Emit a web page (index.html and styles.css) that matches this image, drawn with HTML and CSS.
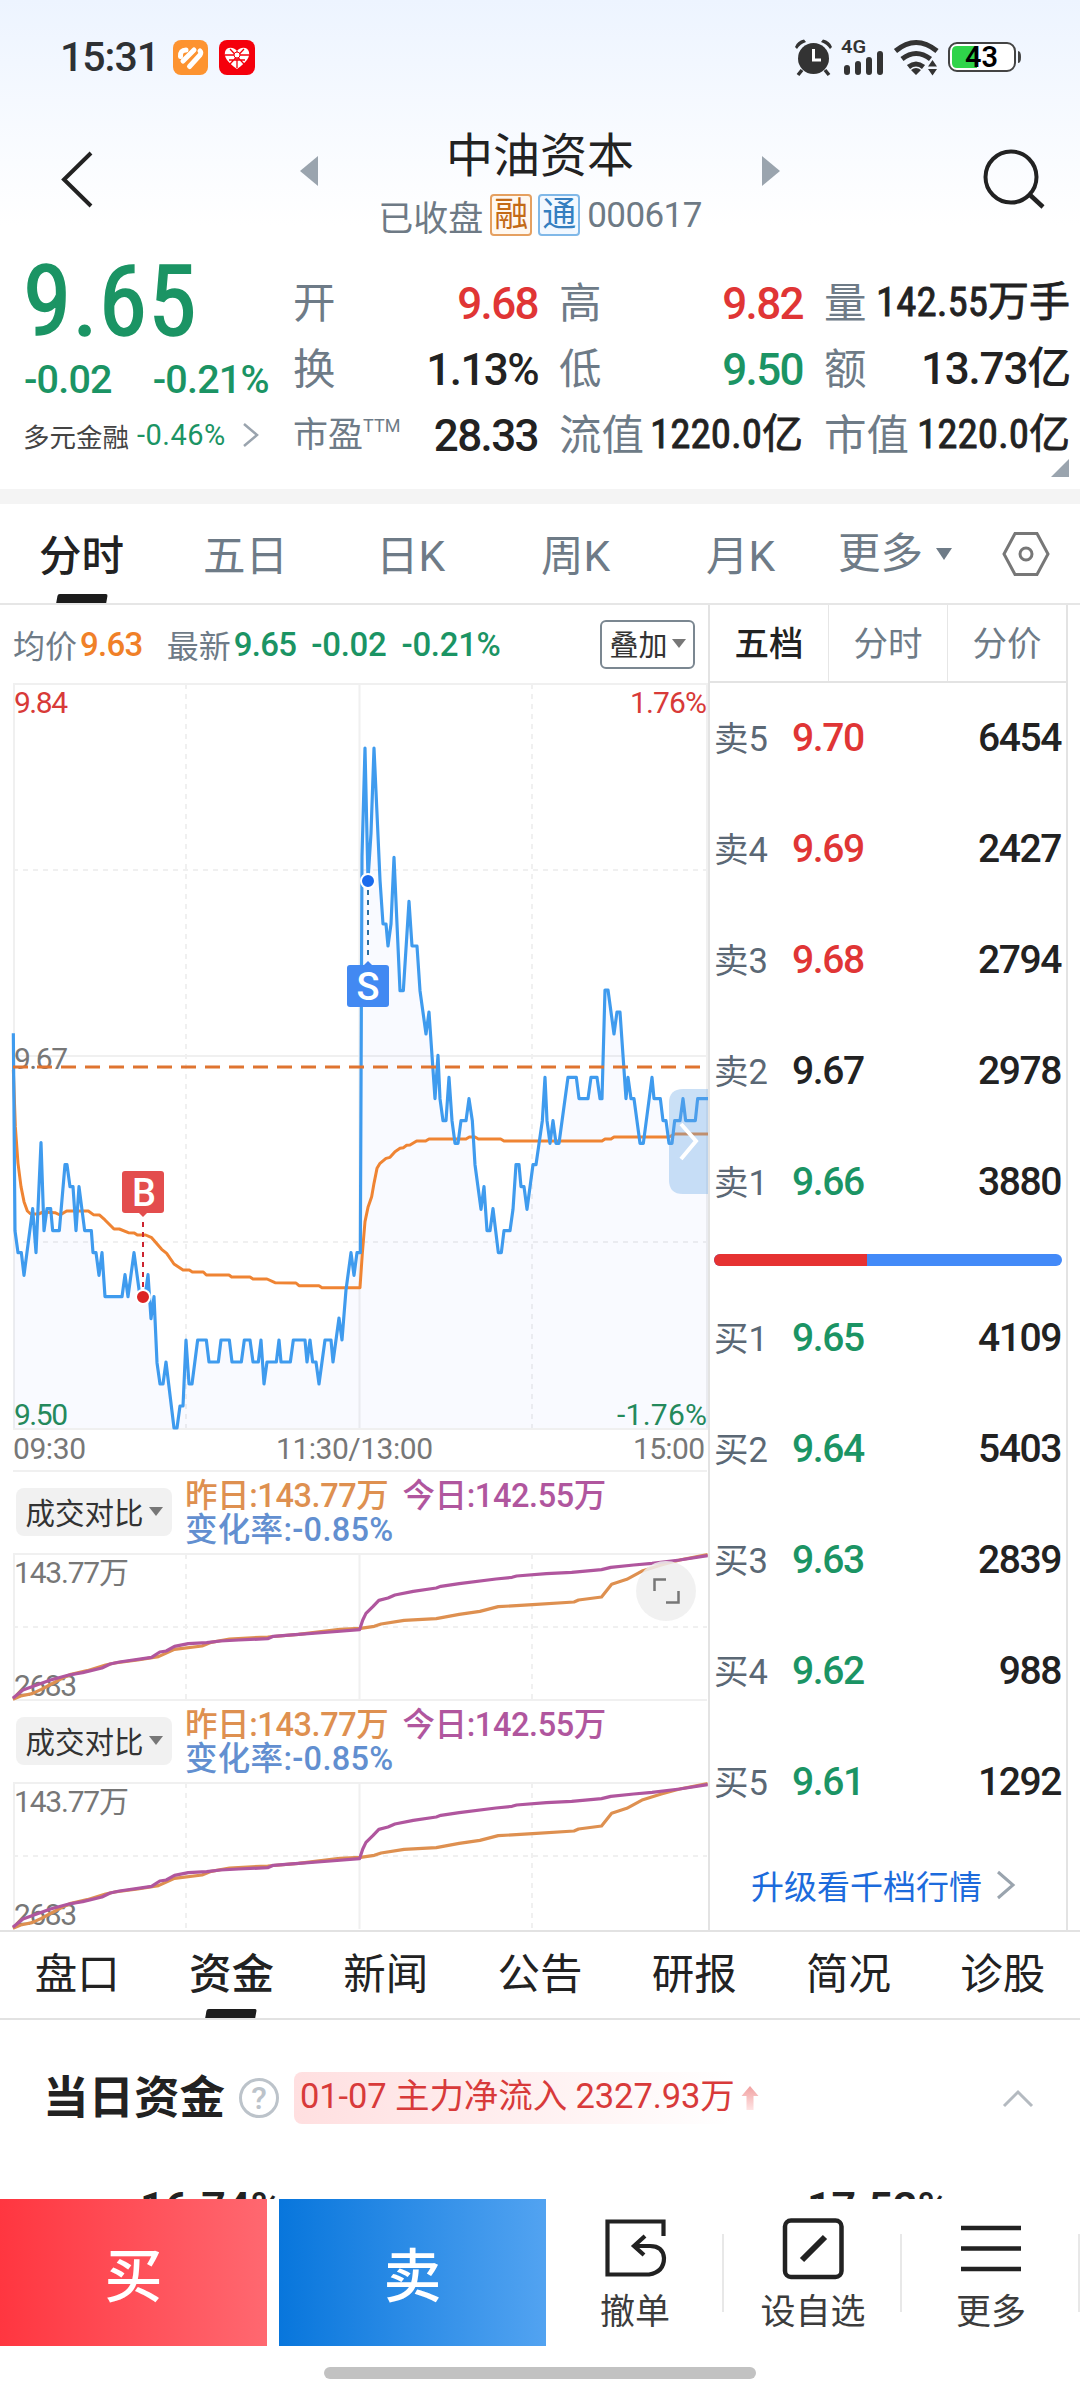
FILE: index.html
```html
<!DOCTYPE html>
<html lang="zh-CN">
<head>
<meta charset="utf-8">
<title>中油资本 000617</title>
<link rel="stylesheet" href="styles.css">
</head>
<body>
<div class="screen">
  <header class="top">
    <div class="status">
      <span class="clock">15:31</span>
      <svg class="app-icon" width="35" height="35" viewBox="0 0 35 35"><rect width="35" height="35" rx="8" fill="#fd9330"/><g stroke="#fff" stroke-width="5" stroke-linecap="round" fill="none"><path d="M7.500 16.500Q7 10 13 10"/><path d="M10 21L21 10"/><path d="M16.500 26.500L27 15Q28.500 12.500 27 11"/></g></svg>
      <svg class="app-icon" width="36" height="35" viewBox="0 0 36 35"><rect width="36" height="35" rx="8" fill="#f5000c"/><path d="M18 29C8 22 5 17 6 12C7 7 14 6 18 11C22 6 29 7 30 12C31 17 28 22 18 29Z" fill="#fff"/><g stroke="#f5000c" stroke-width="1.300" fill="none"><path d="M11 9L25 24M25 9L11 24M6 15H30M10 20H26M18 11V28"/></g><circle cx="18" cy="15" r="3" fill="#fff" stroke="#f5000c"/></svg>
      <svg class="sys" width="230" height="40" viewBox="791 37 230 40">
        <g fill="#333"><circle cx="813.500" cy="58.500" r="15.500"/><path d="M795 47Q797 41 804 39.500L806 42Q800 44 797 49ZM832 47Q830 41 823 39.500L821 42Q827 44 830 49Z"/></g>
        <path d="M802 70L798 75M825 70L829 75" stroke="#333" stroke-width="3.500"/><path d="M813.500 49V60H821" stroke="#fff" stroke-width="3" fill="none"/>
        <text x="841" y="53" class="g4" textLength="25" lengthAdjust="spacingAndGlyphs">4G</text>
        <g stroke="#333" stroke-width="6" stroke-linecap="round"><path d="M847 68V72M858 64V72M869 60V72M880 54V72"/></g>
        <g fill="none" stroke="#333" stroke-width="5"><path d="M895.500 51Q916 34 937 51"/><path d="M902 59Q916 48 930.500 59"/><path d="M908.500 67Q916 61 923.500 67"/></g>
        <path d="M911 70Q916 66 921 70L916 75ZM928 66.500L932.500 60L937 66.500ZM928 69L932.500 75.500L937 69Z" fill="#333"/>
        <rect x="949" y="43" width="66" height="28" rx="8" fill="#fff" stroke="#444" stroke-width="2"/><path d="M957 46H977V68H957Q952 68 952 63V51Q952 46 957 46Z" fill="#2fd44a"/><path d="M1018 51Q1021 51 1021 57Q1021 63 1018 63Z" fill="#444"/>
        <text x="965" y="67" class="bat" textLength="33" lengthAdjust="spacingAndGlyphs">43</text>
      </svg>
    </div>
    <div class="titlebar">
      <svg class="back" width="34" height="60" viewBox="0 0 34 60"><path d="M31 3L4 29.500L31 56" fill="none" stroke="#222" stroke-width="4"/></svg>
      <svg class="prev" width="18" height="30" viewBox="0 0 18 30"><path d="M18 0V30L0 15Z" fill="#9aa4ae"/></svg>
      <div class="names">
        <h1>中油资本</h1>
        <p><span>已收盘</span><i class="tag rong">融</i><i class="tag tong">通</i><b>000617</b></p>
      </div>
      <svg class="next" width="18" height="30" viewBox="0 0 18 30"><path d="M0 0V30L18 15Z" fill="#9aa4ae"/></svg>
      <svg class="search" width="62" height="60" viewBox="983 149 62 60"><circle cx="1011" cy="177" r="25.500" fill="none" stroke="#222" stroke-width="4"/><path d="M1029 194L1043 207" stroke="#222" stroke-width="4.500"/></svg>
    </div>
  </header>

  <section class="quote">
    <div class="price">
      <strong>9.65</strong>
      <div class="delta"><span>-0.02</span><span>-0.21%</span></div>
      <div class="sector"><span>多元金融</span><em>-0.46%</em><svg width="18" height="26" viewBox="0 0 18 26"><path d="M2 2L15 13L2 24" fill="none" stroke="#9aa4ae" stroke-width="2.500"/></svg></div>
    </div>
    <dl class="facts">
      <div><dt>开</dt><dd class="up">9.68</dd></div><div><dt>高</dt><dd class="up">9.82</dd></div><div><dt>量</dt><dd class="cn">142.55万手</dd></div>
      <div><dt>换</dt><dd>1.13%</dd></div><div><dt>低</dt><dd class="down">9.50</dd></div><div><dt>额</dt><dd class="yi">13.73亿</dd></div>
      <div><dt class="small">市盈<sup>TTM</sup></dt><dd>28.33</dd></div><div><dt>流值</dt><dd class="cn">1220.0亿</dd></div><div><dt>市值</dt><dd class="cn">1220.0亿</dd></div>
    </dl>
    <i class="corner"></i>
  </section>

  <nav class="periods">
    <span class="on">分时</span><span>五日</span><span>日K</span><span>周K</span><span>月K</span><span class="more">更多<i></i></span>
    <svg width="48" height="46" viewBox="0 0 48 46"><path d="M13 2.500H35L46 23L35 43.500H13L2 23Z" fill="none" stroke="#777" stroke-width="3"/><circle cx="24" cy="23" r="6" fill="none" stroke="#777" stroke-width="3"/></svg>
  </nav>

  <main class="board">
    <section class="charts">
      <div class="legend"><span>均价</span><b class="avg">9.63</b><span class="l2">最新</span><b>9.65</b><b class="l3">-0.02</b><b class="l4">-0.21%</b><button>叠加<i></i></button></div>
      <svg class="trend" width="695" height="788" viewBox="13 683 695 788">
        <g fill="none" stroke="#f0f0f0" stroke-width="2"><path d="M13 684H707V1429H14V684M359.500 684V1429M13 1056H707M13 1471H707"/><path d="M186 684V1429M532 684V1429M13 870H707M13 1242H707" stroke-dasharray="5 5"/></g>
        <g transform="translate(0 1020) scale(.33333)" stroke-linejoin="round">
          <path fill="rgba(60,110,250,.03)" d="M40 1224V40L45 632 54 698 64 698 72 766 98 566 108 698 123 368 132 632 141 566 152 566 158 632 178 632 195 434 201 434 210 500 219 500 228 632 237 500 254 632 274 632 279 698 288 698 297 766 306 698 315 830 366 830 375 764 384 830 402 698 420 830 435 830 444 764 453 896 462 830 471 1028 480 1092 489 1092 498 1026 522 1224 531 1224 540 1158 549 1158 558 960 567 1092 576 1092 593 960 619 960 627 1026 655 1026 663 960 688 960 696 1026 724 1026 733 960 750 960 759 1026 775 1026 783 960 792 1092 801 1026 829 1026 837 960 843 1026 871 1026 880 960 915 960 921 1026 930 960 938 1026 948 1026 957 1092 975 960 993 960 999 1026 1017 894 1026 960 1038 810 1053 698 1062 766 1071 698 1081 698 1086 -490 1095 -816 1104 -420 1113 -560 1122 -816 1131 -620 1140 -420 1149 -288 1158 -288 1164 -222 1173 -288 1182 -488 1200 -88 1210 -88 1227 -356 1236 -222 1251 -222 1260 -88 1278 42 1287 -24 1305 236 1314 106 1320 236 1329 302 1338 302 1347 172 1356 302 1365 370 1374 370 1383 302 1398 302 1407 236 1417 302 1425 434 1443 568 1452 500 1461 632 1470 632 1479 566 1487 632 1495 698 1504 698 1512 632 1530 632 1539 568 1548 434 1557 434 1563 500 1572 500 1581 568 1599 434 1608 434 1627 302 1635 172 1641 302 1650 370 1659 302 1668 370 1677 370 1704 172 1729 172 1737 236 1764 236 1773 172 1791 172 1800 236 1806 236 1815 -90 1824 -90 1842 42 1851 -24 1860 -24 1878 236 1884 172 1893 236 1902 236 1920 370 1930 370 1956 172 1962 236 1981 236 1989 302 1998 302 2007 370 2016 370 2024 302 2040 302 2049 236 2057 302 2086 302 2093 236 2124 236V1224Z"/>
          <path fill="none" stroke="#ef8433" stroke-width="9" d="M40 150L46 320 54 430 63 500 72 545 82 573 92 582 115 582 130 576 165 578 180 585 200 573 265 573 280 584 298 585 315 600 342 627 358 627 385 638 403 639 412 645 437 645 455 653 485 688 500 700 522 732 549 750 568 750 577 756 610 756 619 765 687 765 695 771 750 771 759 777 801 777 825 788 888 789 897 797 957 797 966 803 1080 803 1087 700 1095 605 1104 562 1115 530 1122 490 1131 445 1140 430 1158 415 1170 412 1185 395 1200 385 1210 383 1220 376 1230 375 1250 363 1277 363 1287 357 1398 357 1408 351 1425 351 1435 357 1502 357 1512 363 1806 363 1815 357 1833 357 1842 351 2007 351 2024 342 2124 342"/>
          <path fill="none" stroke="#3f9bee" stroke-width="9.500" d="M40 40L45 632 54 698 64 698 72 766 98 566 108 698 123 368 132 632 141 566 152 566 158 632 178 632 195 434 201 434 210 500 219 500 228 632 237 500 254 632 274 632 279 698 288 698 297 766 306 698 315 830 366 830 375 764 384 830 402 698 420 830 435 830 444 764 453 896 462 830 471 1028 480 1092 489 1092 498 1026 522 1224 531 1224 540 1158 549 1158 558 960 567 1092 576 1092 593 960 619 960 627 1026 655 1026 663 960 688 960 696 1026 724 1026 733 960 750 960 759 1026 775 1026 783 960 792 1092 801 1026 829 1026 837 960 843 1026 871 1026 880 960 915 960 921 1026 930 960 938 1026 948 1026 957 1092 975 960 993 960 999 1026 1017 894 1026 960 1038 810 1053 698 1062 766 1071 698 1081 698 1086 -490 1095 -816 1104 -420 1113 -560 1122 -816 1131 -620 1140 -420 1149 -288 1158 -288 1164 -222 1173 -288 1182 -488 1200 -88 1210 -88 1227 -356 1236 -222 1251 -222 1260 -88 1278 42 1287 -24 1305 236 1314 106 1320 236 1329 302 1338 302 1347 172 1356 302 1365 370 1374 370 1383 302 1398 302 1407 236 1417 302 1425 434 1443 568 1452 500 1461 632 1470 632 1479 566 1487 632 1495 698 1504 698 1512 632 1530 632 1539 568 1548 434 1557 434 1563 500 1572 500 1581 568 1599 434 1608 434 1627 302 1635 172 1641 302 1650 370 1659 302 1668 370 1677 370 1704 172 1729 172 1737 236 1764 236 1773 172 1791 172 1800 236 1806 236 1815 -90 1824 -90 1842 42 1851 -24 1860 -24 1878 236 1884 172 1893 236 1902 236 1920 370 1930 370 1956 172 1962 236 1981 236 1989 302 1998 302 2007 370 2016 370 2024 302 2040 302 2049 236 2057 302 2086 302 2093 236 2124 236"/>
        </g>
        <g class="axis">
          <text class="r" x="14" y="713" textLength="54">9.84</text><text class="r" x="630" y="713" textLength="77">1.76%</text>
          <text x="14" y="1069" textLength="54">9.67</text>
          <text class="g" x="14" y="1425" textLength="54">9.50</text><text class="g" x="617" y="1425" textLength="90">-1.76%</text>
          <text x="13" y="1459" textLength="73">09:30</text><text x="276" y="1459" textLength="157">11:30/13:00</text><text x="633" y="1459" textLength="72">15:00</text>
        </g>
        <path d="M13 1067H700" stroke="#df7430" stroke-width="3" stroke-dasharray="15 9"/>
        <path d="M368 890V957" stroke="#2f6f9f" stroke-width="2" stroke-dasharray="5 5"/><circle cx="368" cy="881" r="7" fill="#1a6bed" stroke="#fff" stroke-width="2"/>
        <path d="M363 966L368 961L373 966Z" fill="#4285f0"/><rect x="347" y="965" width="42" height="42" rx="3" fill="#4289f2"/><text class="flag" x="368" y="1000" text-anchor="middle">S</text>
        <path d="M143 1222V1290" stroke="#cc2430" stroke-width="2" stroke-dasharray="5 5"/><circle cx="143" cy="1297" r="7" fill="#dc2424" stroke="#fff" stroke-width="2"/>
        <path d="M138 1212L143 1217L148 1212Z" fill="#e34d4d"/><rect x="122" y="1171" width="42" height="42" rx="3" fill="#e34d4d"/><text class="flag" x="144" y="1206" text-anchor="middle">B</text>
        <path d="M708 1089H683Q669 1089 669 1103V1180Q669 1194 683 1194H708Z" fill="rgba(100,165,230,.34)"/><path d="M681 1124L696 1141L681 1159" fill="none" stroke="#fff" stroke-width="4"/>
      </svg>

      <div class="compare">
        <div class="cmp-head"><button>成交对比<i></i></button><p><span class="yd">昨日:143.77万</span><span class="td">今日:142.55万</span><br><span class="rate">变化率:-0.85%</span></p></div>
        <svg width="695" height="148" viewBox="13 1553 695 148">
          <g fill="none" stroke="#f0f0f0" stroke-width="2"><path d="M13 1554H707M14 1553V1700M359.500 1554V1700M13 1700H707"/><path d="M186 1554V1700M532 1554V1700M13 1627H707" stroke-dasharray="5 5"/></g>
          <g class="axis"><text x="14" y="1583" textLength="115">143.77万</text><text x="14" y="1696" textLength="63">2683</text></g>
          <g id="cumulative" class="cum" transform="translate(0 1460) scale(.4592 .33333)">
            <path stroke="#de9050" d="M28 718L45 708 70 701 90 688 108 675 135 655 155 643 190 632 230 615 250 609 300 600 345 590 380 568 440 558 460 547 500 537 583 531 650 523 740 508 785 505 815 499 830 492 880 481 950 476 1000 463 1045 454 1085 440 1160 434 1250 426 1260 420 1310 411 1332 373 1365 358 1400 332 1440 315 1480 300 1541 284"/>
            <path stroke="#b0569e" d="M28 715L50 690 80 675 110 660 150 645 180 638 222 624 240 612 260 606 330 592 348 576 362 573 380 559 410 551 450 548 480 543 520 540 583 536 595 529 650 523 720 516 783 509 790 480 797 460 812 440 825 421 845 414 860 405 900 394 950 384 960 379 1000 371 1080 357 1115 352 1125 348 1190 341 1245 337 1310 329 1330 322 1380 315 1420 310 1480 300 1541 287"/>
          </g>
          <circle cx="666" cy="1591" r="30" fill="#efefef" fill-opacity=".85"/><path d="M654.500 1591V1579.500H666M666 1602.500H678.500V1591" fill="none" stroke="#777" stroke-width="2.500"/>
        </svg>
      </div>
      <div class="compare">
        <div class="cmp-head"><button>成交对比<i></i></button><p><span class="yd">昨日:143.77万</span><span class="td">今日:142.55万</span><br><span class="rate">变化率:-0.85%</span></p></div>
        <svg width="695" height="148" viewBox="13 1553 695 148">
          <g fill="none" stroke="#f0f0f0" stroke-width="2"><path d="M13 1554H707M14 1553V1700M359.500 1554V1700"/><path d="M186 1554V1700M532 1554V1700M13 1627H707" stroke-dasharray="5 5"/></g>
          <g class="axis"><text x="14" y="1583" textLength="115">143.77万</text><text x="14" y="1696" textLength="63">2683</text></g>
          <use href="#cumulative"/>
        </svg>
      </div>
    </section>

    <aside class="book">
      <div class="book-tabs"><span class="on">五档</span><span>分时</span><span>分价</span></div>
      <ul class="asks">
        <li><span>卖5</span><b class="up">9.70</b><em>6454</em></li>
        <li><span>卖4</span><b class="up">9.69</b><em>2427</em></li>
        <li><span>卖3</span><b class="up">9.68</b><em>2794</em></li>
        <li><span>卖2</span><b>9.67</b><em>2978</em></li>
        <li><span>卖1</span><b class="down">9.66</b><em>3880</em></li>
      </ul>
      <div class="ratio"><i></i></div>
      <ul>
        <li><span>买1</span><b class="down">9.65</b><em>4109</em></li>
        <li><span>买2</span><b class="down">9.64</b><em>5403</em></li>
        <li><span>买3</span><b class="down">9.63</b><em>2839</em></li>
        <li><span>买4</span><b class="down">9.62</b><em>988</em></li>
        <li><span>买5</span><b class="down">9.61</b><em>1292</em></li>
      </ul>
      <div class="upgrade"><span>升级看千档行情</span><svg width="20" height="32" viewBox="0 0 20 32"><path d="M2 3L17 16L2 29" fill="none" stroke="#9aa4ae" stroke-width="3"/></svg></div>
    </aside>
  </main>

  <nav class="info-tabs"><span>盘口</span><span class="on">资金</span><span>新闻</span><span>公告</span><span>研报</span><span>简况</span><span>诊股</span></nav>

  <section class="funds">
    <h2>当日资金</h2>
    <i class="help">?</i>
    <p class="flow">01-07 主力净流入 2327.93万</p>
    <svg class="rise" width="18" height="26" viewBox="0 0 18 26"><defs><linearGradient id="fade" x1="0" y1="0" x2="0" y2="1"><stop offset="0" stop-color="#f0a0a0"/><stop offset="1" stop-color="#ffe4e4"/></linearGradient></defs><path d="M9 1L17.500 11H12.500V25H5.500V11H.5Z" fill="url(#fade)"/></svg>
    <svg class="fold" width="32" height="20" viewBox="0 0 32 20"><path d="M2 18L16 4L30 18" fill="none" stroke="#b4bac0" stroke-width="3"/></svg>
  </section>
  <div class="shares"><span>16.74%</span><span>17.52%</span></div>

  <footer class="actions">
    <button class="buy">买</button><button class="sell">卖</button>
    <div class="act"><svg width="62" height="62" viewBox="605 2217 62 62"><path d="M664.500 2236V2221.500H608.500V2274.500H650Q665 2272 665 2258Q664 2246 651 2246H635M646 2236L635 2246L645 2255" fill="none" stroke="#222" stroke-width="4.200"/></svg><span>撤单</span></div>
    <div class="act"><svg width="62" height="62" viewBox="781 2217 62 62"><rect x="784" y="2220.500" width="56.500" height="56.500" rx="6" fill="none" stroke="#222" stroke-width="4.500"/><path d="M801 2260L824 2237" stroke="#222" stroke-width="6"/></svg><span>设自选</span></div>
    <div class="act"><svg width="62" height="62" viewBox="959 2217 62 62"><path d="M960 2228H1020M960 2248.500H1020M960 2269H1020" stroke="#222" stroke-width="4.500"/></svg><span>更多</span></div>
  </footer>
  <div class="home"></div>
</div>
</body>
</html>
```
FILE: styles.css
```css
* { box-sizing: border-box; margin: 0; padding: 0; }
body { background: #fff; color: #222; font-family: Roboto, "Noto Sans CJK SC", sans-serif; }
i, em { font-style: normal; }
ul { list-style: none; }
svg { display: block; flex: none; overflow: visible; }
button { border: 0; background: none; font: inherit; color: inherit; }
.screen { width: 1080px; height: 2400px; overflow: hidden; white-space: nowrap; display: flex; flex-direction: column; }
.screen > * { flex: none; }
.up { color: #e03535 !important; }
.down { color: #1b9464 !important; }

.top { height: 250px; background: linear-gradient(#edf4ff, #fff 90%); }
.status { height: 114px; display: flex; align-items: center; padding: 0 59px 0 60px; }
.clock { width: 113px; font-size: 41px; font-weight: 500; letter-spacing: -1px; color: #2e3134; }
.app-icon { margin-right: 11px; }
.sys { margin-left: auto; }
.g4 { font: 600 19px Roboto; fill: #333; }
.bat { font: 600 30px Roboto; fill: #000; }
.titlebar { height: 136px; display: flex; padding-left: 60px; }
.back { margin-top: 36px; }
.prev { margin: 42px 0 0 206px; }
.names { width: 444px; text-align: center; padding-top: 10px; }
.names h1 { font-size: 47px; font-weight: 400; line-height: 64px; }
.names p { height: 54px; display: flex; align-items: center; justify-content: center; font-size: 35px; color: #6e7a85; }
.tag { width: 42px; height: 42px; border: 2px solid; border-radius: 4px; margin-left: 7px; line-height: 37px; font-size: 34px; }
.rong { color: #c36a16; border-color: #e5a060; background: #fff8f0; }
.tong { color: #357fc0; border-color: #80b8e8; background: #f2f8ff; margin-right: 7px; margin-left: 6px; }
.names b { font-weight: 400; letter-spacing: -.6px; }
.next { margin-top: 42px; }
.search { margin: 35px 0 0 203px; }

.quote { height: 254px; padding: 0 10px 0 24px; border-bottom: 15px solid #f4f4f4; display: flex; position: relative; }
.price { width: 270px; color: #1b9464; }
.price strong { display: block; margin-left: -1px; font: 400 98px/103px "Roboto Condensed", Roboto; height: 103px; letter-spacing: .8px; -webkit-text-stroke: 1.500px; }
.delta { display: flex; gap: 41px; height: 54px; font: 500 39.500px/54px Roboto; letter-spacing: -.8px; }
.sector { display: flex; align-items: center; font-size: 26.500px; height: 56px; color: #444; }
.sector em { color: #1b9464; font-size: 29px; letter-spacing: .5px; margin: 0 16px 0 8px; }
.sector span { margin-left: -1px; }
.facts { flex: 1; display: grid; grid-template-columns: 244px 243px 245px; column-gap: 22px; grid-template-rows: repeat(3, 66px); padding-top: 21px; }
.facts > div { display: flex; justify-content: space-between; align-items: center; }
.facts dt { font-size: 42.500px; line-height: 62px; color: #6e7b87; margin-left: -1px; }
.facts .small { font-size: 35px; }
.facts sup { font-size: 18px; vertical-align: 15px; line-height: 0; }
.facts dd { font-size: 44px; line-height: 66px; font-weight: 500; letter-spacing: -1.600px; }
.facts .yi { letter-spacing: -1.200px; padding-bottom: 2px; }
.facts .cn { font-family: "Roboto Condensed", "Noto Sans CJK SC"; font-weight: 400; font-size: 41px; letter-spacing: 0; line-height: 62px; padding-bottom: 4px; -webkit-text-stroke: .8px; }
.corner { position: absolute; right: 11px; bottom: 12px; border: solid transparent; border-width: 0 0 18px 18px; border-bottom-color: #9aa4ae; }

.periods { height: 101px; border-bottom: 2px solid #e6e6e6; display: flex; align-items: center; position: relative; font-size: 42.500px; color: #6e7b87; }
.periods span { width: 165px; text-align: center; line-height: 105px; height: 99px; position: relative; }
.periods span:first-child { width: 163px; }
.periods .on { color: #222; font-weight: 500; }
.on { position: relative; }
.periods .on::after, .info-tabs .on::after { content: ""; position: absolute; left: 50%; bottom: 0; width: 50px; height: 9px; margin-left: -25px; background: #1c1c1c; transform: skewX(-10deg); border-radius: 2px 2px 0 0; }
.periods .more { width: 148px; display: flex; align-items: center; justify-content: center; gap: 13px; margin: 0 33px 0 -2px; }
.more i, button i { border: solid transparent; border-width: 12px 8px 0; border-top-color: #6e7b87; }

.board { height: 1325px; display: flex; padding-left: 13px; }
.charts { width: 695px; }
.legend { height: 78px; display: flex; align-items: center; font-size: 32px; color: #6e7b87; }
.legend b { font-size: 33px; font-weight: 500; color: #1b9464; letter-spacing: -.7px; margin-left: 3px; }
.legend .avg { color: #f08028; }
.legend .l2 { margin-left: 24px; }
.legend .l3, .legend .l4 { margin-left: 15px; letter-spacing: -.3px; }
.legend button { margin-left: auto; margin-right: 13px; width: 95px; height: 49px; padding-bottom: 2px; border: 2px solid #7b8791; border-radius: 6px; font-size: 29px; color: #333; display: flex; align-items: center; justify-content: center; gap: 4px; }
.legend button i, .cmp-head button i { border-width: 9px 7px 0; border-top-color: #777; }
.trend { height: 788px; }
.axis text { font: 400 30px Roboto, "Noto Sans CJK SC"; fill: #777; }
.axis .r { fill: #d83a38; }
.axis .g { fill: #24895c; }
.flag { font: 500 38px Roboto; fill: #fff; }
.compare { height: 229px; }
.cmp-head { height: 82px; display: flex; }
.cmp-head button { width: 156px; height: 48px; margin: 17px 14px 0 3px; padding-bottom: 2px; background: #f1f1f1; border-radius: 8px; font-size: 29.500px; color: #333; display: flex; align-items: center; justify-content: center; gap: 5px; }
.cmp-head p { padding-top: 8px; font-size: 32.500px; font-weight: 500; line-height: 34px; letter-spacing: -.4px; }
.yd { color: #de9050; margin-left: -1px; }
.td { color: #b0569e; margin-left: 14px; }
.rate { color: #628fd0; letter-spacing: .3px; margin-left: -1px; }
.cum path { fill: none; stroke-width: 3.200px; vector-effect: non-scaling-stroke; stroke-linejoin: round; }

.book { width: 360px; border: solid #e3e3e3; border-width: 0 2px; }
.book-tabs { height: 78px; display: flex; border-bottom: 2px solid #e3e3e3; }
.book-tabs span { flex: 1; text-align: center; line-height: 79px; font-size: 34.500px; color: #6e7b87; }
.book-tabs span + span { border-left: 1px solid #e6e6e6; }
.book-tabs .on { color: #222; font-weight: 500; }
.book li { height: 111px; display: flex; align-items: center; padding: 0 5px 0 4px; font-size: 39px; }
.book li span { width: 78px; font-size: 34.500px; color: #5b6875; padding-bottom: 3px; }
.book li b, .book li em { font-size: 39px; font-weight: 500; letter-spacing: -1.400px; }
.book li em { margin-left: auto; }
.asks { margin-top: -1px; }
.ratio { height: 12px; margin: 17px 4px 16px 4px; background: #438af8; border-radius: 6px; overflow: hidden; }
.ratio i { display: block; width: 44%; height: 100%; background: #e63232; }
.upgrade { height: 88px; display: flex; align-items: center; justify-content: center; gap: 14px; font-size: 33px; color: #1c6bdc; padding: 8px 9px 0 0; }

.info-tabs { height: 90px; border: solid #e2e2e2; border-width: 2px 0; display: flex; font-size: 42.500px; font-weight: 400; }
.info-tabs span { flex: 1; text-align: center; line-height: 85px; height: 86px; }
.info-tabs .on { font-weight: 500; }
.funds { height: 172px; display: flex; align-items: center; padding: 0 46px 16px 44px; }
.funds h2 { font-size: 45.500px; font-weight: 700; width: 195px; padding-bottom: 8px; margin-left: -1px; margin-right: 1px; }
.help { width: 40px; height: 40px; border: 3px solid #bcc3ca; border-radius: 50%; color: #bcc3ca; font-size: 32px; line-height: 35px; text-align: center; font-weight: 500; }
.flow { margin-left: 15px; width: 437px; height: 52px; border-radius: 8px; background: linear-gradient(90deg, #ffdfe0, #fff); color: #d83a3a; font-size: 34.500px; line-height: 48px; padding-left: 6px; letter-spacing: -.1px; }
.rise { margin-left: 10px; }
.fold { margin-left: auto; }
.shares { height: 7px; overflow: hidden; display: flex; font: 600 43px/50px Roboto; }
.shares span { flex: none; margin: -10px 0 0 140px; width: 527px; }

.actions { height: 147px; display: flex; background: #fff; }
.actions button { width: 267px; color: #fff; font-size: 58px; font-weight: 500; padding-bottom: 2px; }
.buy { background: linear-gradient(90deg, #ff3640, #ff6870); }
.actions .sell { margin-left: 12px; background: linear-gradient(90deg, #0876dc, #52a3f1); }
.act { width: 178px; padding-top: 18px; display: flex; flex-direction: column; align-items: center; position: relative; font-size: 35px; line-height: 67px; color: #3c3c3c; }
.act::after { content: ""; position: absolute; right: 0; top: 35px; width: 2px; height: 78px; background: #e8e8e8; }
.home { width: 432px; height: 12px; border-radius: 6px; background: #c2c2c2; margin: 21px auto 0; }
```
